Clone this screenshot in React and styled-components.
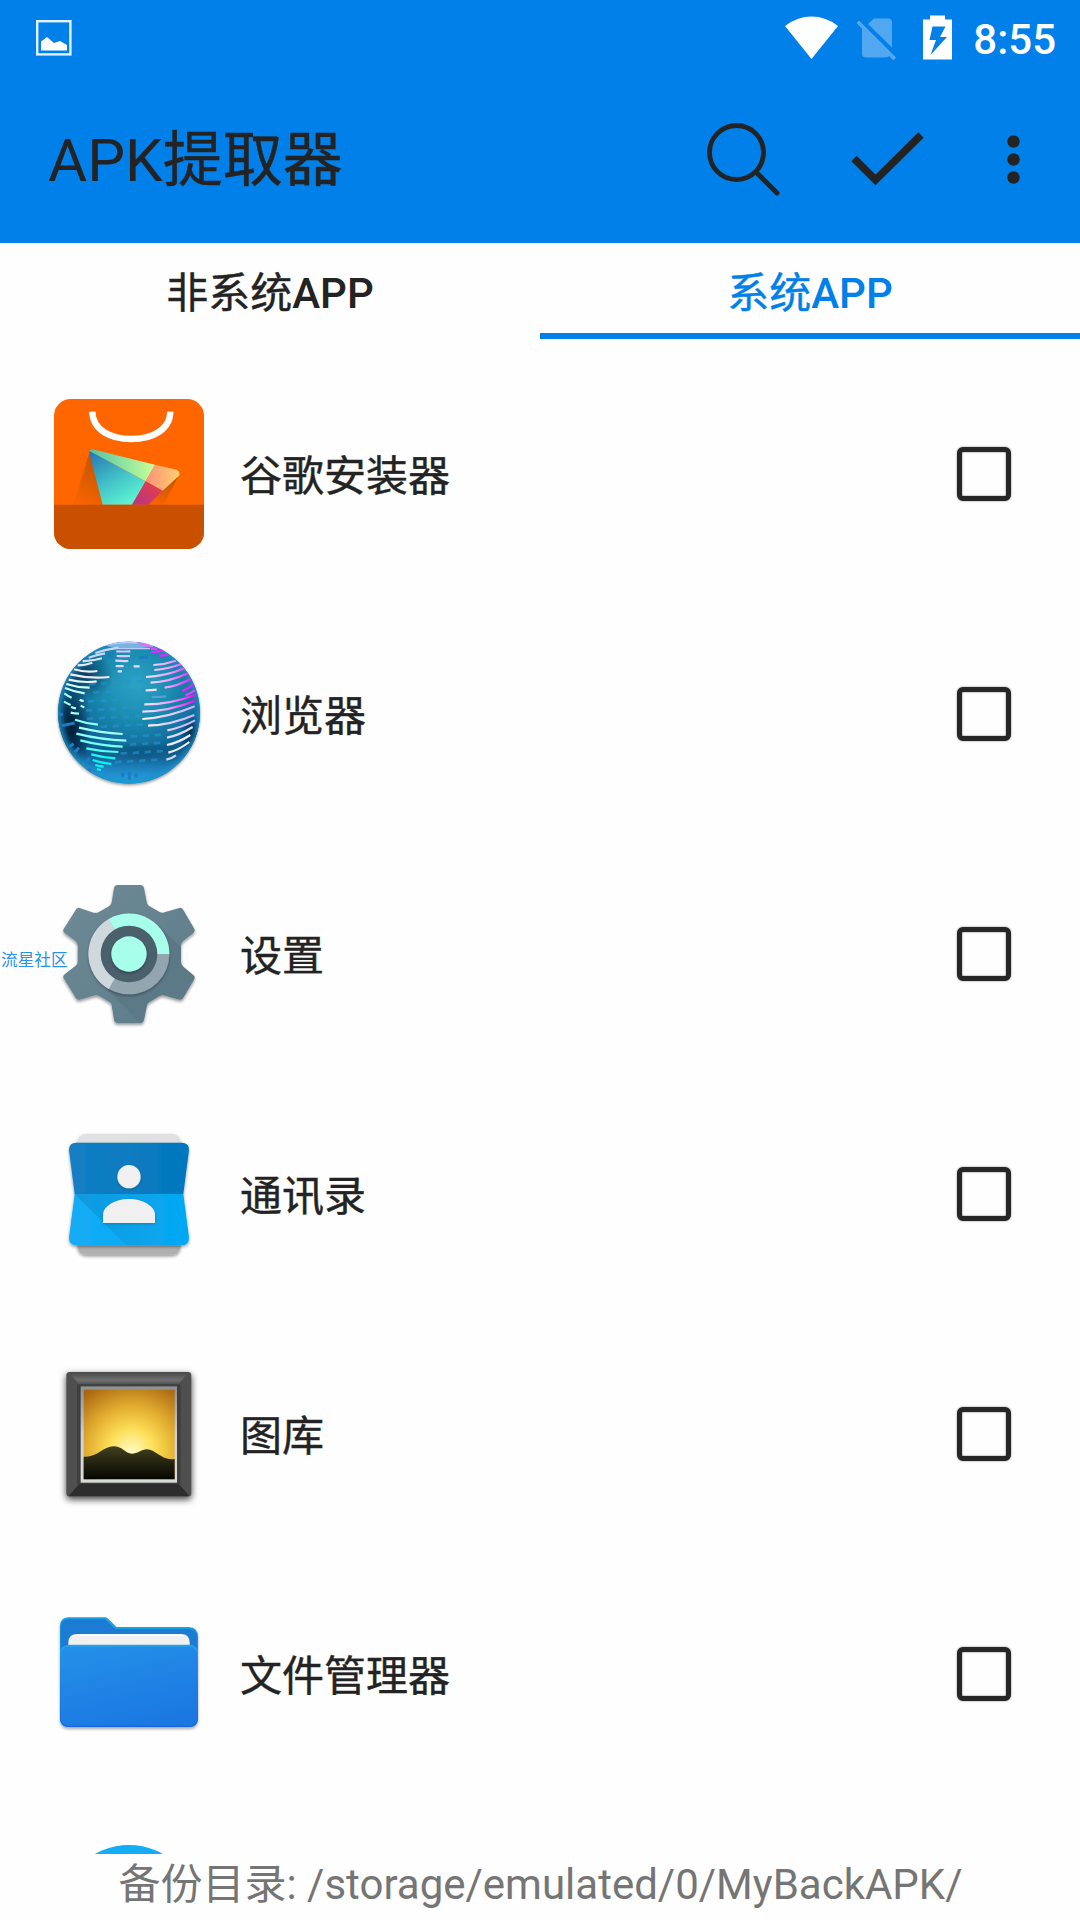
import { useState } from 'react'
import styled, { createGlobalStyle } from 'styled-components'

const GlobalStyle = createGlobalStyle`
  * {
    box-sizing: border-box;
  }

  body {
    margin: 0;
    background-color: #fff;
    color: #232323;
    font-family: Roboto, 'Noto Sans CJK SC', sans-serif;
  }
`

const Screen = styled.div`
  position: relative;
  display: flex;
  flex-direction: column;
  width: 1080px;
  height: 1920px;
  overflow: hidden;
  background-color: #fefefe;
`

const Header = styled.header`
  display: flex;
  flex-direction: column;
  height: 243px;
  background-color: #0080e8;
`

const StatusBar = styled.div`
  display: flex;
  align-items: center;
  justify-content: space-between;
  height: 75px;
  padding: 0 24px 0 36px;
`

const StatusIcons = styled.div`
  display: flex;
  align-items: center;
`

const Clock = styled.span`
  margin-left: 19px;
  padding-top: 5px;
  color: #fff;
  font-size: 42px;
  font-weight: 500;
  line-height: 50px;
`

const Toolbar = styled.div`
  flex: 1;
  display: flex;
  align-items: center;
  padding: 0 60px 0 48px;
`

const Title = styled.h1`
  flex: 1;
  margin: 0;
  padding-top: 3px;
  font-size: 60px;
  font-weight: 400;
  line-height: 70px;
`

const Actions = styled.div`
  display: flex;
  align-items: center;
`

const ActionButton = styled.button`
  display: flex;
  margin-left: ${(props) => props.$gap || 0}px;
  padding: 0;
  border: none;
  background: none;
  cursor: pointer;
`

const Tabs = styled.nav`
  display: flex;
  height: 96px;
`

const Tab = styled.button`
  flex: 1;
  padding: 11px 0 0;
  border: none;
  border-bottom: 6px solid ${(props) => (props.$active ? '#0080e8' : 'transparent')};
  background: none;
  color: ${(props) => (props.$active ? '#0080e8' : '#232323')};
  font-family: inherit;
  font-size: 42px;
  font-weight: 500;
  line-height: 50px;
  cursor: pointer;
`

// Chinese part of a label, a touch heavier than the regular weight
const Han = styled.span`
  font-weight: 400;
  -webkit-text-stroke: 0.4px currentColor;
`

const List = styled.ul`
  flex: 1;
  min-height: 0;
  margin: 0;
  padding: 15px 0 0;
  overflow: hidden;
  list-style: none;
`

const Row = styled.li`
  display: flex;
  align-items: center;
  height: 240px;
  padding: 0 69px 0 54px;
`

const AppIcon = styled.svg`
  flex: none;
  width: 150px;
  height: 150px;
  overflow: visible;
`

const AppName = styled.span`
  flex: 1;
  margin-left: 36px;
  padding-top: 5px;
  font-size: 42px;
  line-height: 50px;
`

const Check = styled.button`
  width: 54px;
  height: 54px;
  padding: 0;
  border: 5px solid #262626;
  border-radius: 6px;
  background-color: ${(props) => (props.$checked ? '#0080e8' : '#fefefe')};
  box-shadow: 0 0 2px rgba(0, 0, 0, 0.5), inset 0 0 2px rgba(0, 0, 0, 0.6);
  cursor: pointer;
`

const Footer = styled.footer`
  height: 66px;
  padding: 6px 0 0 1px;
  color: #757575;
  font-size: 42px;
  line-height: 50px;
  text-align: center;
  white-space: nowrap;
`

const Watermark = styled.span`
  position: absolute;
  top: 949px;
  left: 1px;
  color: #2b90ee;
  font-size: 16.7px;
  line-height: 24px;
`

const StoreIcon = () => (
  <AppIcon viewBox="72 57 450 450">
    <defs>
      <linearGradient id="storeBlue" x1="0" y1="0" x2="0.6" y2="1">
        <stop offset="0" stopColor="#2274b4" />
        <stop offset="0.6" stopColor="#44c4c8" />
        <stop offset="1" stopColor="#5cf0d0" />
      </linearGradient>
      <linearGradient id="storeGreen">
        <stop offset="0" stopColor="#52c4a8" />
        <stop offset="1" stopColor="#c8ff98" />
      </linearGradient>
      <linearGradient id="storeYellow">
        <stop offset="0" stopColor="#ff9078" />
        <stop offset="1" stopColor="#ffd070" />
      </linearGradient>
      <linearGradient id="storeRed" x1="0" y1="1" x2="1" y2="0">
        <stop offset="0" stopColor="#b83488" />
        <stop offset="1" stopColor="#e84040" />
      </linearGradient>
      <linearGradient id="storeShade" x1="0.6" y1="0" x2="0.3" y2="1">
        <stop offset="0" stopColor="#c05400" />
        <stop offset="1" stopColor="#f86400" />
      </linearGradient>
    </defs>
    <rect x="72" y="57" width="450" height="450" rx="50" fill="#ff6600" />
    <path d="M179 215 130 374H220L188 225Z" fill="url(#storeShade)" />
    <path d="M447 285 401 374H355L398 332Z" fill="url(#storeShade)" />
    <path d="M187 95C188 150 242 177 304 177S420 150 421 95" fill="none" stroke="#fff" strokeWidth="19" />
    <path d="M179 213 347 304 306 374H218L179 224Z" fill="url(#storeBlue)" />
    <path d="M179 213Q183 206 193 209L375 254 347 304Z" fill="url(#storeGreen)" />
    <path d="M375 254 440 269Q452 275 447 287L398 332 347 304Z" fill="url(#storeYellow)" />
    <path d="M347 304 398 332 355 374H306Z" fill="url(#storeRed)" />
    <path d="M72 374H522V457A50 50 0 0 1 472 507H122A50 50 0 0 1 72 457Z" fill="#c85000" />
  </AppIcon>
)

// each land strip is [x1, y1, x2, y2, sag, stroke]
const strips = [
  [196, 99, 265, 83, -3, '#c4d8ff'],
  [176, 113, 225, 100, -2, '#c4d8ff'],
  [158, 124, 216, 115, 4, '#d4e4ff'],
  [143, 136, 187, 128, 4, '#e0e8ff'],
  [132, 148, 202, 153, 8, '#f0eaff'],
  [121, 163, 238, 171, 10, '#f4e8ff'],
  [116, 179, 200, 184, 8, '#e8f4ff'],
  [109, 192, 179, 203, 6, '#d4ffff'],
  [105, 204, 164, 220, 4, '#c0ffff'],
  [103, 220, 125, 233, 2, '#a0fff4'],
  [102, 245, 122, 255, 1, '#a0fff4'],
  [123, 261, 138, 265, 1, '#a0fff4'],
  [149, 239, 161, 243, 1, '#d8ffff'],
  [152, 257, 163, 262, 1, '#b0ffff'],
  [122, 278, 147, 281, 1, '#a0ffff'],
  [135, 299, 204, 314, 4, '#90ffff'],
  [147, 323, 278, 342, 6, '#a8ffff'],
  [139, 341, 289, 362, 8, '#90ffff'],
  [151, 361, 278, 380, 7, '#78fff4'],
  [169, 385, 265, 396, 5, '#50fff0'],
  [184, 403, 256, 415, 4, '#20f4f4'],
  [188, 420, 244, 432, 3, '#10f0f0'],
  [196, 435, 221, 440, 2, '#10f0f0'],
  [201, 447, 213, 450, 1, '#10f0f0'],
  [259, 94, 301, 94, 1, '#d4c8ff'],
  [260, 108, 300, 108, 1, '#d4c8ff'],
  [256, 122, 295, 123, 1, '#e0d4ff'],
  [257, 138, 281, 138, 1, '#e0d4ff'],
  [263, 154, 276, 154, 0, '#e0e0ff'],
  [311, 139, 329, 139, 0, '#e8dcff'],
  [322, 67, 364, 80, -1, '#f060ff'],
  [362, 86, 382, 86, 0, '#f040ff'],
  [364, 96, 400, 91, 2, '#f020ff'],
  [388, 107, 414, 104, 2, '#f020ff'],
  [370, 135, 438, 122, 5, 'url(#strip)'],
  [373, 150, 454, 132, 6, 'url(#strip)'],
  [348, 171, 464, 145, 11, 'url(#strip)'],
  [362, 188, 474, 160, 12, 'url(#strip)'],
  [347, 211, 380, 209, 1, '#f4e0ff'],
  [404, 203, 482, 177, 8, 'url(#strip)'],
  [457, 214, 490, 193, 3, '#f020ff'],
  [366, 231, 408, 229, 1, '#58a0d8'],
  [467, 226, 494, 211, 2, '#f040ff'],
  [343, 253, 497, 224, 15, 'url(#strip)'],
  [337, 275, 496, 242, 15, 'url(#strip)'],
  [337, 297, 494, 259, 15, 'url(#pale)'],
  [354, 317, 493, 285, 14, 'url(#pale)'],
  [412, 331, 495, 301, 7, 'url(#pale)'],
  [411, 353, 488, 321, 8, '#e0dcff'],
  [411, 375, 481, 345, 8, '#f0ecff'],
  [415, 398, 478, 366, 8, '#f0ecff'],
  [409, 419, 438, 406, 4, '#c8dcff'],
]

// rows of dashes over the sea: [x, y, count]
const dashRows = [
  [268, 166, 2],
  [177, 193, 5],
  [190, 218, 5],
  [175, 245, 5],
  [168, 272, 5],
  [170, 297, 5],
  [212, 321, 6],
  [302, 350, 3],
  [300, 374, 3],
  [272, 401, 4],
  [255, 427, 4],
]

const BrowserIcon = () => (
  <AppIcon viewBox="72 57 450 450">
    <defs>
      <radialGradient id="ocean" cx="0.55" cy="0.3" r="0.72">
        <stop offset="0" stopColor="#2ca4c4" />
        <stop offset="0.35" stopColor="#1a8bb0" />
        <stop offset="0.65" stopColor="#106a9a" />
        <stop offset="0.85" stopColor="#0b4c7c" />
        <stop offset="1" stopColor="#1474a8" />
      </radialGradient>
      <linearGradient id="globeGlow" x1="0" y1="0" x2="0" y2="1">
        <stop offset="0.72" stopColor="#26a5e8" stopOpacity="0" />
        <stop offset="0.88" stopColor="#2496d8" stopOpacity="0.8" />
        <stop offset="1" stopColor="#22b6ef" />
      </linearGradient>
      <radialGradient id="globeShade">
        <stop offset="0" stopColor="#001429" stopOpacity="0.9" />
        <stop offset="1" stopColor="#001429" stopOpacity="0" />
      </radialGradient>
      <radialGradient id="globeRim">
        <stop offset="0.9" stopColor="#1c84c0" stopOpacity="0" />
        <stop offset="1" stopColor="#1c94c8" stopOpacity="0.8" />
      </radialGradient>
      <linearGradient id="strip" gradientUnits="userSpaceOnUse" x1="360" y1="0" x2="490" y2="0">
        <stop offset="0" stopColor="#f4d8ff" />
        <stop offset="0.45" stopColor="#f0a0ff" />
        <stop offset="1" stopColor="#f010f4" />
      </linearGradient>
      <linearGradient id="pale" gradientUnits="userSpaceOnUse" x1="350" y1="0" x2="490" y2="0">
        <stop offset="0" stopColor="#fff0ff" />
        <stop offset="1" stopColor="#c8b0ff" />
      </linearGradient>
      <clipPath id="globeClip">
        <circle cx="297" cy="278" r="213" />
      </clipPath>
      <filter id="globeShadow" x="-10%" y="-10%" width="120%" height="120%">
        <feDropShadow dx="0" dy="4" stdDeviation="4" floodOpacity="0.45" />
      </filter>
    </defs>
    <circle cx="297" cy="278" r="213" fill="url(#ocean)" filter="url(#globeShadow)" />
    <g clipPath="url(#globeClip)">
      <ellipse cx="125" cy="320" rx="58" ry="150" fill="url(#globeShade)" />
      <ellipse cx="165" cy="165" rx="85" ry="75" fill="url(#globeShade)" opacity="0.65" />
      <ellipse cx="330" cy="412" rx="190" ry="45" fill="url(#globeShade)" opacity="0.55" />
      <ellipse cx="492" cy="345" rx="42" ry="60" fill="url(#globeShade)" />
      <rect x="72" y="57" width="450" height="450" fill="url(#globeGlow)" />
      <circle cx="297" cy="278" r="213" fill="url(#globeRim)" />
      <ellipse cx="300" cy="75" rx="70" ry="11" fill="#78b4e0" />
      <path d="M222 76Q300 58 370 78M240 86H360" fill="none" stroke="#b8ccff" strokeWidth="4" />
      {dashRows.map(([x, y, count]) =>
        Array.from({ length: count }, (_, i) => (
          <path
            key={`${y}-${i}`}
            d={`M${x + i * 36} ${y - i * 2}l19 -2`}
            stroke="#2b93d2"
            strokeWidth="8"
            opacity="0.6"
          />
        ))
      )}
      <path
        d="M85 283h14M96 317l38-8M118 380l13-9M134 397l13-14M152 456l33-8M170 425l10-12M228 110h20M327 114l27-4M278 458v14M298 457v22M318 460v12"
        stroke="#1c7cc4"
        strokeWidth="9"
      />
      {strips.map(([x1, y1, x2, y2, sag, color]) => (
        <path
          key={`${x1}-${y1}`}
          d={`M${x1} ${y1}Q${(x1 + x2) / 2} ${(y1 + y2) / 2 + sag} ${x2} ${y2}`}
          fill="none"
          stroke={color}
          strokeWidth="6.5"
        />
      ))}
    </g>
  </AppIcon>
)

const SettingsIcon = () => (
  <AppIcon viewBox="162 57 450 450">
    <defs>
      <linearGradient id="gear" x1="0" y1="0" x2="1" y2="1">
        <stop offset="0" stopColor="#6f8a97" />
        <stop offset="1" stopColor="#5c7b88" />
      </linearGradient>
      <linearGradient id="gearFold" x1="0" y1="0" x2="1" y2="1">
        <stop offset="0.3" stopColor="#3e5965" stopOpacity="0.6" />
        <stop offset="1" stopColor="#3e5965" stopOpacity="0" />
      </linearGradient>
      <filter id="gearShadow" x="-10%" y="-10%" width="120%" height="125%">
        <feDropShadow dx="0" dy="6" stdDeviation="4" floodOpacity="0.4" />
      </filter>
      <filter id="ringShadow" x="-20%" y="-20%" width="140%" height="140%">
        <feDropShadow dx="0" dy="4" stdDeviation="5" floodOpacity="0.35" />
      </filter>
    </defs>
    <path
      d="M353 75H421Q430 75 432 84L441 130Q443 136 449 139L479 156Q487 161 496 156L538 144Q545 142 550 150L582 205Q587 213 580 219L550 243Q543 249 543 257V305Q543 313 550 320L580 345Q587 351 582 359L550 413Q545 421 538 419L496 407Q487 404 479 408L449 426Q443 429 441 436L432 480Q430 489 421 489H353Q344 489 342 480L335 436Q334 429 328 426L298 408Q290 404 281 407L239 419Q231 421 227 413L191 355Q187 349 194 343L226 318Q233 313 233 305V257Q233 249 226 243L194 219Q187 213 191 207L227 150Q231 142 239 144L281 158Q290 160 298 155L328 138Q334 134 335 127L342 84Q344 75 353 75Z"
      fill="url(#gear)"
      filter="url(#gearShadow)"
    />
    <path
      d="M474 196 543 262V305Q543 313 550 320L580 345Q587 351 582 359L550 413Q545 421 538 419L496 407Q487 404 479 408L449 426Q443 429 441 436L432 480Q430 489 421 489L300 367Z"
      fill="url(#gearFold)"
      opacity="0.5"
    />
    <circle cx="387" cy="282" r="121" fill="#93a5af" filter="url(#ringShadow)" />
    <path d="M387 282 326 177A121 121 0 0 0 326 387Z" fill="#cfd8dc" />
    <path d="M387 282H508A121 121 0 0 0 326 177Z" fill="#a7ffeb" />
    <circle cx="387" cy="282" r="85" fill="#4a606b" />
    <circle cx="387" cy="282" r="53" fill="#a7ffeb" filter="url(#ringShadow)" />
  </AppIcon>
)

const ContactsIcon = () => (
  <AppIcon viewBox="42 27 450 450">
    <defs>
      <linearGradient id="cardTop">
        <stop offset="0" stopColor="#147fc4" />
        <stop offset="1" stopColor="#0277bd" />
      </linearGradient>
      <linearGradient id="cardBottom">
        <stop offset="0" stopColor="#15acf5" />
        <stop offset="1" stopColor="#03a9f4" />
      </linearGradient>
      <linearGradient id="cardFold" x1="0" y1="0" x2="1" y2="0">
        <stop offset="0" stopColor="#0783c4" stopOpacity="0.45" />
        <stop offset="1" stopColor="#0783c4" stopOpacity="0" />
      </linearGradient>
      <filter id="cardShadow" x="-10%" y="-10%" width="120%" height="125%">
        <feDropShadow dx="0" dy="5" stdDeviation="4" floodOpacity="0.4" />
      </filter>
      <filter id="personShadow" x="-10%" y="-10%" width="120%" height="125%">
        <feDropShadow dx="0" dy="3" stdDeviation="4" floodOpacity="0.2" />
      </filter>
    </defs>
    <g filter="url(#cardShadow)">
      <rect x="112" y="71" width="310" height="80" rx="26" fill="#e1e1e1" />
      <rect x="112" y="350" width="310" height="84" rx="26" fill="#b0b0b0" />
    </g>
    <g filter="url(#cardShadow)">
      <path d="M109 98H425Q448 98 447 121L430 252H104L87 121Q86 98 109 98Z" fill="url(#cardTop)" />
      <path d="M104 252H430L447 382Q448 406 425 406H109Q86 406 87 382Z" fill="url(#cardBottom)" />
    </g>
    <path d="M104 252H430L447 382Q448 406 425 406H258Z" fill="url(#cardFold)" />
    <g fill="#f0f0f0" filter="url(#personShadow)">
      <circle cx="267" cy="200" r="35" />
      <path d="M189 339V315C189 289 224 267 267 267S345 289 345 315V339Z" />
    </g>
  </AppIcon>
)

const GalleryIcon = () => (
  <AppIcon viewBox="42 27 450 450">
    <defs>
      <radialGradient id="sunset" gradientUnits="userSpaceOnUse" cx="275" cy="305" r="225">
        <stop offset="0" stopColor="#fffbc8" />
        <stop offset="0.3" stopColor="#fddf58" />
        <stop offset="0.6" stopColor="#e2ae30" />
        <stop offset="1" stopColor="#a86410" />
      </radialGradient>
      <linearGradient id="hill" x1="0" y1="0" x2="0" y2="1">
        <stop offset="0" stopColor="#40401e" />
        <stop offset="1" stopColor="#060602" />
      </linearGradient>
      <linearGradient id="frameTop" x1="0" y1="0" x2="0" y2="1">
        <stop offset="0" stopColor="#484848" />
        <stop offset="0.6" stopColor="#707070" />
        <stop offset="1" stopColor="#4a4a4a" />
      </linearGradient>
      <linearGradient id="mat" x1="0" y1="0" x2="0" y2="1">
        <stop offset="0" stopColor="#8c9090" />
        <stop offset="0.5" stopColor="#d0d0d0" />
        <stop offset="1" stopColor="#d8dcd8" />
      </linearGradient>
      <filter id="frameShadow" x="-12%" y="-12%" width="124%" height="128%">
        <feDropShadow dx="0" dy="8" stdDeviation="11" floodOpacity="0.75" />
      </filter>
    </defs>
    <rect x="79" y="66" width="375" height="374" rx="10" fill="#4f4f4f" filter="url(#frameShadow)" />
    <path d="M87 67H446L412 106H120Z" fill="url(#frameTop)" />
    <path d="M86 438H448L414 399H120Z" fill="#2d2d2d" />
    <rect x="111" y="103" width="311" height="299" fill="#3f3f3f" />
    <rect x="122" y="109" width="289" height="289" fill="url(#mat)" />
    <rect x="131" y="119" width="273" height="269" fill="url(#sunset)" />
    <path
      d="M131 320C170 324 190 289 220 289S255 312 277 311 302 298 321 298C347 298 367 334 404 327V388H131Z"
      fill="url(#hill)"
    />
  </AppIcon>
)

const FilesIcon = () => (
  <AppIcon viewBox="42 27 450 450">
    <defs>
      <linearGradient id="folder" x1="0.2" y1="0" x2="0.6" y2="1">
        <stop offset="0" stopColor="#238fe8" />
        <stop offset="1" stopColor="#1b78e2" />
      </linearGradient>
      <linearGradient id="folderEdge" x1="0" y1="0" x2="0" y2="1">
        <stop offset="0" stopColor="#25a4e8" />
        <stop offset="0.12" stopColor="#2394e6" />
        <stop offset="1" stopColor="#1765d8" />
      </linearGradient>
      <filter id="folderShadow" x="-10%" y="-10%" width="120%" height="125%">
        <feDropShadow dx="0" dy="6" stdDeviation="5" floodOpacity="0.35" />
      </filter>
    </defs>
    <path
      d="M87 82H195Q201 82 206 88L229 111H446Q474 112 474 140V385Q474 411 447 411H87Q60 411 60 385V108Q60 82 87 82Z"
      fill="#1e9fe0"
      filter="url(#folderShadow)"
    />
    <path d="M87 88H195L226 117H446Q472 118 472 143V300H62V112Q62 88 87 88Z" fill="#1c7cd4" />
    <path d="M85 180V157Q86 132 112 132H423Q448 132 449 157V180Z" fill="#f1f1f1" />
    <path d="M91 144Q96 133 112 134H423Q439 133 444 144Q437 137 423 138H112Q98 137 91 144Z" fill="#fff" />
    <path
      d="M87 164H447Q474 166 474 190V385Q474 411 447 411H87Q60 411 60 385V190Q60 166 87 164Z"
      fill="url(#folderEdge)"
    />
    <path d="M87 170H447Q471 172 471 195V383Q471 407 447 407H87Q63 407 63 383V195Q63 172 87 170Z" fill="url(#folder)" />
  </AppIcon>
)

const RoundIcon = () => (
  <AppIcon viewBox="0 0 150 150">
    <circle cx="75" cy="75" r="69" fill="#12adf5" />
  </AppIcon>
)

const apps = [
  { name: '谷歌安装器', Icon: StoreIcon },
  { name: '浏览器', Icon: BrowserIcon },
  { name: '设置', Icon: SettingsIcon },
  { name: '通讯录', Icon: ContactsIcon },
  { name: '图库', Icon: GalleryIcon },
  { name: '文件管理器', Icon: FilesIcon },
  { name: '', Icon: RoundIcon },
]

const tabs = ['非系统', '系统']

const App = () => {
  const [activeTab, setActiveTab] = useState(1)
  const [checked, setChecked] = useState([])

  const handleCheck = (index) => {
    setChecked(
      checked.includes(index) ? checked.filter((i) => i !== index) : [...checked, index]
    )
  }

  return (
    <Screen>
      <GlobalStyle />
      <Header>
        <StatusBar>
          <svg width="36" height="36" viewBox="0 0 36 36">
            <rect x="1.2" y="1.2" width="33.2" height="33.2" fill="none" stroke="#e4f2ff" strokeWidth="2.4" />
            <path d="M5 21.5 11 17 18 23 24 21 31 25V30.5H5Z" fill="#fff" />
          </svg>
          <StatusIcons>
            <svg width="170" height="46" viewBox="784 14.5 170 46">
              <path d="M785 25.5Q797 16 811.5 16T838 25.5L811.5 58.5Z" fill="#fff" />
              <g fill="#52a8f0">
                <path d="M874 18H888Q892 18 892 22V47L868 23.5Z" />
                <path d="M862 27 889.5 55Q888.5 57 885 57H866Q862 57 862 53Z" />
                <path d="M856.5 22.5 859 20 896 57 893.5 60Z" />
              </g>
              <path
                fillRule="evenodd"
                d="M930 15H945V19H952V59H923V19H930ZM932.5 26 929.5 39.5H936L930.5 54.5 947 36.5H940L945.5 26Z"
                fill="#fff"
              />
            </svg>
            <Clock>8:55</Clock>
          </StatusIcons>
        </StatusBar>
        <Toolbar>
          <Title>
            APK<Han>提取器</Han>
          </Title>
          <Actions>
            <ActionButton aria-label="search">
              <svg width="73" height="73" viewBox="0 0 73 73" fill="none" stroke="#232323">
                <circle cx="29.5" cy="29.5" r="27" strokeWidth="4.8" />
                <path d="M49 49 70 70" strokeWidth="4.8" strokeLinecap="round" />
              </svg>
            </ActionButton>
            <ActionButton $gap={71} aria-label="select all">
              <svg width="73" height="54" viewBox="0 0 73 54">
                <path d="M3 26.5 24.5 48 70 3" fill="none" stroke="#232323" strokeWidth="7.5" />
              </svg>
            </ActionButton>
            <ActionButton $gap={83} aria-label="more">
              <svg width="13" height="49" viewBox="0 0 13 49" fill="#232323">
                <circle cx="6.5" cy="6.5" r="6.2" />
                <circle cx="6.5" cy="24.5" r="6.2" />
                <circle cx="6.5" cy="42.5" r="6.2" />
              </svg>
            </ActionButton>
          </Actions>
        </Toolbar>
      </Header>
      <Tabs>
        {tabs.map((tab, index) => (
          <Tab key={tab} $active={index === activeTab} onClick={() => setActiveTab(index)}>
            <Han>{tab}</Han>APP
          </Tab>
        ))}
      </Tabs>
      <List>
        {apps.map(({ name, Icon }, index) => (
          <Row key={index}>
            <Icon />
            <AppName>
              <Han>{name}</Han>
            </AppName>
            <Check
              aria-label={name}
              $checked={checked.includes(index)}
              onClick={() => handleCheck(index)}
            />
          </Row>
        ))}
      </List>
      <Footer>备份目录: /storage/emulated/0/MyBackAPK/</Footer>
      <Watermark>流星社区</Watermark>
    </Screen>
  )
}

export default App
